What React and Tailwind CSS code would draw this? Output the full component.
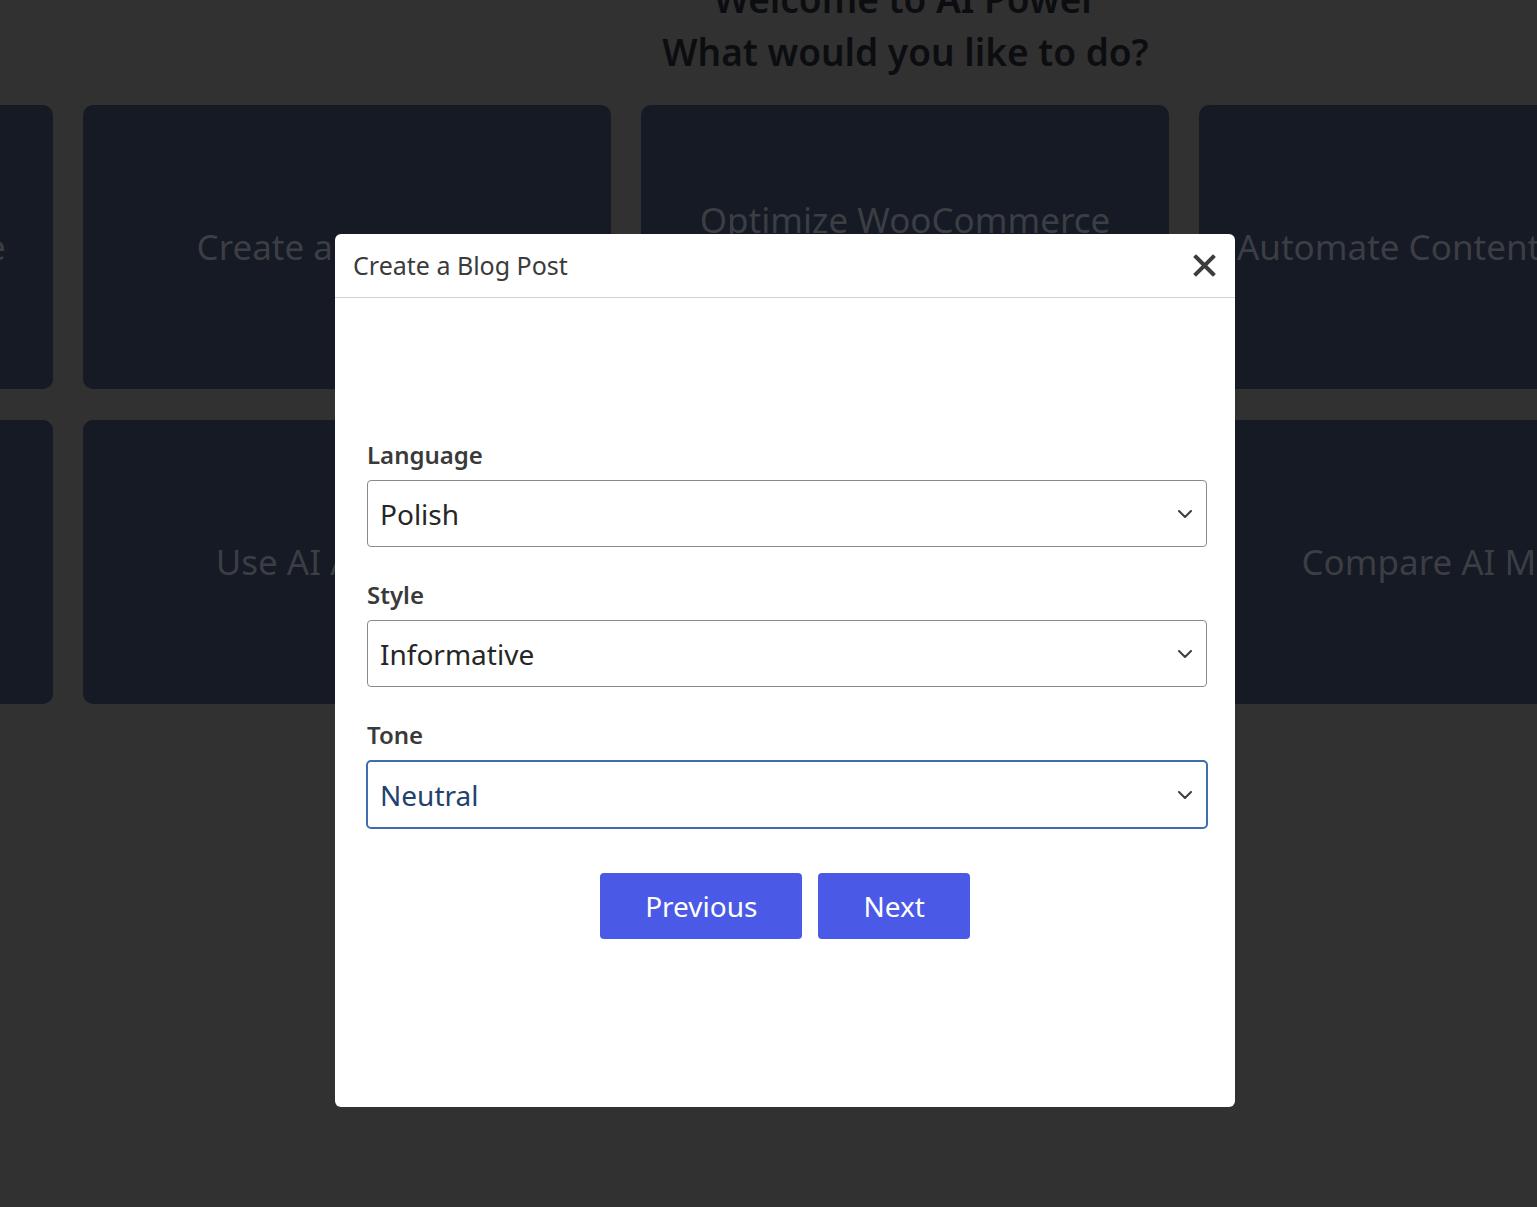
import React from 'react';

const cardsTop = ['Create a Custom Template', 'Create a Blog Post', 'Optimize WooCommerce Products', 'Automate Content Creation'];
const cardsBottom = ['Train Your AI', 'Use AI Assistant', 'Design AI Forms', 'Compare AI Models'];

const Chevron = () => (
  <svg width="14" height="8" viewBox="0 0 14 8" fill="none" className="shrink-0">
    <path d="M1 1l6 6 6-6" stroke="#3f3f3f" strokeWidth="2" strokeLinecap="round" strokeLinejoin="round" />
  </svg>
);

const Card = ({ text }) => (
  <div className="h-[284px] rounded-[10px] bg-[#151a25] flex items-center justify-center px-6 text-center">
    <span className="text-[35px] leading-[54px] text-[#3b3e43]">{text}</span>
  </div>
);

const Field = ({ label, value, focused }) => (
  <div className="flex flex-col">
    <label className="text-[24px] leading-[30px] font-semibold text-[#3a3a3a] mb-[10px]">{label}</label>
    <div
      className={
        focused
          ? 'h-[69px] -mx-px flex items-center justify-between rounded-[5px] border-2 border-[#3d6eb0] pl-[12px] pr-[14px]'
          : 'h-[67px] flex items-center justify-between rounded-[4px] border border-[#8a8a8a] pl-[12px] pr-[14px]'
      }
    >
      <span className={focused ? 'text-[28px] text-[#22426e]' : 'text-[28px] text-[#262626]'}>{value}</span>
      <Chevron />
    </div>
  </div>
);

export default function App() {
  return (
    <div className="relative h-[1207px] w-full overflow-hidden bg-[#313131]" style={{ fontFamily: '"Noto Sans", "Open Sans", sans-serif' }}>
      <div className="pl-[274px] text-center -mt-[28px]">
        <h1 className="text-[37px] leading-[53px] font-semibold text-[#0c0d10]">Welcome to AI Power</h1>
        <h2 className="text-[37px] leading-[53px] font-semibold text-[#0c0d10]">What would you like to do?</h2>
      </div>

      <div className="mt-[27px] ml-[-475px] w-[2202px] flex flex-col gap-[31px]">
        <div className="grid grid-cols-4 gap-[30px]">
          {cardsTop.map((t) => (
            <Card key={t} text={t} />
          ))}
        </div>
        <div className="grid grid-cols-4 gap-[30px]">
          {cardsBottom.map((t) => (
            <Card key={t} text={t} />
          ))}
        </div>
      </div>

      {/* modal */}
      <div className="absolute left-[335px] top-[234px] w-[900px] h-[873px] rounded-[6px] bg-white flex flex-col">
        <div className="h-[64px] shrink-0 flex items-center justify-between border-b border-[#d2d2d2] pl-[18px] pr-[19px]">
          <span className="text-[25px] text-[#3b3b3b]">Create a Blog Post</span>
          <svg width="23" height="23" viewBox="0 0 23 23">
            <path d="M3 3l17 17M20 3L3 20" stroke="#3d3d3d" strokeWidth="4" strokeLinecap="square" />
          </svg>
        </div>
        <div className="pt-[142px] pl-[32px] pr-[28px] flex flex-col gap-[33px]">
          <Field label="Language" value="Polish" />
          <Field label="Style" value="Informative" />
          <Field label="Tone" value="Neutral" focused />
        </div>
        <div className="mt-[44px] flex justify-center gap-[16px]">
          <button className="h-[66px] px-[45px] rounded-[4px] bg-[#4b5ae6] text-white text-[28px]">Previous</button>
          <button className="h-[66px] px-[45px] rounded-[4px] bg-[#4b5ae6] text-white text-[28px]">Next</button>
        </div>
      </div>
    </div>
  );
}
